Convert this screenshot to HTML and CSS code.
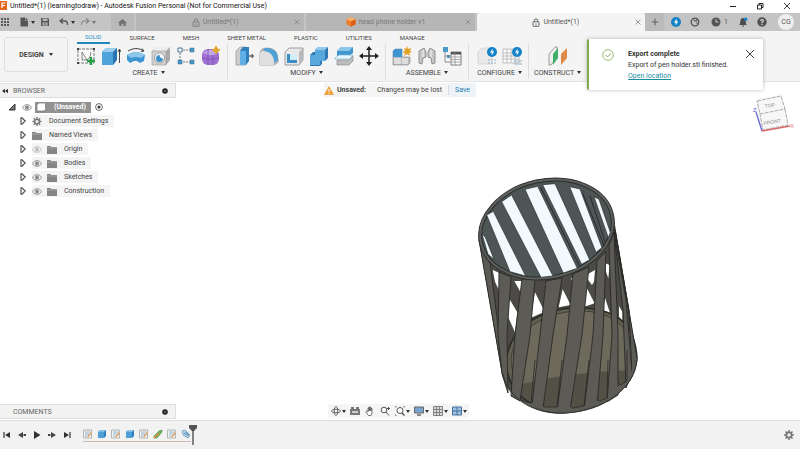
FILE: index.html
```html
<!DOCTYPE html>
<html lang="en">
<head>
<meta charset="utf-8">
<title>Untitled*(1) - Autodesk Fusion Personal</title>
<link rel="stylesheet" href="styles.css">
</head>
<body>
<svg class="defs" aria-hidden="true">
  <symbol id="close" viewBox="0 0 10 10"><path d="M1 1l8 8M9 1l-8 8" fill="none" stroke="currentColor"/></symbol>
  <symbol id="lock" viewBox="0 0 8 10"><path d="M2 4V3a2 2 0 0 1 4 0v1" fill="none" stroke="currentColor"/><rect x=".7" y="4.2" width="6.6" height="5" rx=".5" fill="none" stroke="currentColor"/><path d="M4 6v1.600" stroke="currentColor"/></symbol>
  <symbol id="folder" viewBox="0 0 10 9"><path d="M0 1h3.500l1 1H10v7H0z" fill="#858585"/><path d="M0 3h10" stroke="#bbb" stroke-width=".6"/></symbol>
  <symbol id="eye" viewBox="0 0 10 7"><path d="M.4 3.500C2.500-.2 7.500-.2 9.600 3.500 7.500 7.200 2.500 7.200.4 3.500z" fill="#eee" stroke="#888" stroke-width=".9"/><circle cx="5" cy="3.500" r="1.900" fill="#888"/></symbol>
  <symbol id="gear" viewBox="0 0 10 10"><circle cx="5" cy="5" r="2.600" fill="none" stroke="#777" stroke-width="1.700"/><path d="M5 0v2M5 8v2M0 5h2M8 5h2M1.500 1.500l1.400 1.400M7.100 7.100l1.400 1.400M8.500 1.500L7.100 2.900M2.900 7.100L1.500 8.500" stroke="#777" stroke-width="1.500"/></symbol>
  <symbol id="expand" viewBox="0 0 6 8"><path d="M1 .8v6.400h1L5.200 4 2 .8z" fill="#fff" stroke="#444" stroke-width="1.100"/></symbol>
  <symbol id="dot" viewBox="0 0 6 6"><circle cx="3" cy="3" r="2.800" fill="#222"/><path d="M1.800 3h2.400" stroke="#ddd" stroke-width=".6"/></symbol>
  <symbol id="bolt" viewBox="0 0 10 10"><circle cx="5" cy="5" r="5" fill="#1682c8"/><path d="M5.600 1.800L3 5.500h1.700V8.200L7.200 4.500H5.600z" fill="#fff"/></symbol>
  <symbol id="t-sketch" viewBox="0 0 10 10"><path d="M.5 1h8v8h-8z" fill="#f4f4f4" stroke="#999" stroke-width=".7"/><path d="M2 3h5M2 5h4M2 7h2" stroke="#5f9cc4" stroke-width=".7"/><path d="M4.500 8l4-4.500" stroke="#e0a060" stroke-width="1.400"/></symbol>
  <symbol id="t-extrude" viewBox="0 0 10 10"><path d="M1 3l2-2h6v6L7 9H1z" fill="#2f80be"/><path d="M1 3l2-2h6L7 3z" fill="#86c0e6"/><path d="M1 3h6v6H1z" fill="#4f9fd6"/></symbol>
</svg>

<header class="titlebar">
  <svg class="logo" viewBox="0 0 8 9"><path d="M0 0h7v9H0z" fill="#e4651c"/><path d="M2 7V2h3.500M2 4.500h3" fill="none" stroke="#fff" stroke-width="1.200"/></svg>
  <h1>Untitled*(1) (learningtodraw) - Autodesk Fusion Personal (Not for Commercial Use)</h1>
  <div class="window-buttons">
    <button aria-label="Minimize"><svg viewBox="0 0 8 8"><path d="M1 4.500h6" stroke="#222"/></svg></button>
    <button aria-label="Restore"><svg viewBox="0 0 8 8"><path d="M1.500 3h4v4h-4zM3 3V1.500h4v4H5.500" fill="none" stroke="#222"/></svg></button>
    <button aria-label="Close window"><svg viewBox="0 0 8 8"><path d="M1 1l6 6M7 1L1 7" stroke="#222" stroke-width=".9"/></svg></button>
  </div>
</header>

<nav class="docbar" aria-label="Documents">
  <div class="quick">
    <button aria-label="Data panel"><svg viewBox="0 0 10 10" fill="#5a5a5a"><path d="M1 1h2v2H1zM4 1h2v2H4zM7 1h2v2H7zM1 4h2v2H1zM4 4h2v2H4zM7 4h2v2H7zM1 7h2v2H1zM4 7h2v2H4zM7 7h2v2H7z"/></svg></button>
    <button aria-label="File" class="menu"><svg viewBox="0 0 10 10"><path d="M1.500.5h4.500v3h3v6H1.500zM6.600.5L9 3H6.600z" fill="#555"/></svg></button>
    <button aria-label="Save"><svg viewBox="0 0 10 10"><path d="M1 1h7l1 1v7H1z" fill="#555"/><path d="M2.500 1.500h5v2.500h-5zM2.500 5.500h5v3h-5z" fill="#b5b5b5"/><path d="M4 7h2" stroke="#555"/></svg></button>
    <button aria-label="Undo" class="menu"><svg viewBox="0 0 10 10"><path d="M4 1.500L1 4l3 2.500M1.500 4H6q2.500 0 2.500 4" fill="none" stroke="#555" stroke-width="1.300"/></svg></button>
    <button aria-label="Redo" class="menu faint"><svg viewBox="0 0 10 10"><path d="M6 1.500L9 4 6 6.500M8.500 4H4Q1.500 4 1.500 8" fill="none" stroke="#555" stroke-width="1.100"/></svg></button>
  </div>
  <button class="home" aria-label="Home"><svg viewBox="0 0 10 10"><path d="M0 5.200L5 1l5 4.200H8.600V9H6V6.500H4V9H1.400V5.200z" fill="#707070"/></svg></button>
  <div class="doctab"><button class="name"><svg class="lock"><use href="#lock"/></svg>Untitled*(1)</button><button aria-label="Close tab" class="x"><svg><use href="#close"/></svg></button></div>
  <div class="doctab"><button class="name"><svg class="cube" viewBox="0 0 10 10"><path d="M5 .3l4.500 2v5L5 9.700.5 7.300v-5z" fill="#ee7c28"/><path d="M5 .3l4.500 2L5 4.500.5 2.300z" fill="#f8b06b"/><path d="M5 4.500l4.500-2.200v5L5 9.700z" fill="#d95f16"/></svg>head phone holder v1</button><button aria-label="Close tab" class="x"><svg><use href="#close"/></svg></button></div>
  <div class="doctab active"><button class="name"><svg class="lock"><use href="#lock"/></svg>Untitled*(1)</button><button aria-label="Close tab" class="x"><svg><use href="#close"/></svg></button></div>
  <button class="new" aria-label="New tab"><svg viewBox="0 0 10 10"><path d="M5 1v8M1 5h8" stroke="#666" stroke-width="1.500"/></svg></button>
  <div class="account">
    <button aria-label="Extensions"><svg><use href="#bolt"/></svg></button>
    <button aria-label="Sync"><svg viewBox="0 0 10 10"><circle cx="5" cy="5" r="3.800" fill="none" stroke="#555" stroke-width="1.300"/><path d="M3.500 2.500L5 4h2M7 2v2M6.500 5.500l1 1.500" stroke="#555" stroke-width="1.100" fill="none"/></svg></button>
    <button aria-label="Job status" class="jobs"><svg viewBox="0 0 10 10"><circle cx="5" cy="5" r="4.500" fill="#555"/><path d="M5 2.200V5h2.500" stroke="#ccc" fill="none"/></svg>1</button>
    <button aria-label="Notifications"><svg viewBox="0 0 10 10"><path d="M1 8q1.300-1 1.300-3.500Q2.500 1 5 1t2.700 3.500Q7.700 7 9 8zM4 8.500h2v1H4z" fill="#4c4c4c"/><circle cx="7.700" cy="2.300" r="1.800" fill="#1682c8"/></svg></button>
    <button aria-label="Help"><svg viewBox="0 0 10 10"><circle cx="5" cy="5" r="4.700" fill="#505050"/><path d="M3.600 3.900Q3.700 2.500 5 2.500t1.400 1.300Q6.400 4.700 5 5.200V6M5 6.800V8" fill="none" stroke="#eee" stroke-width="1.100"/></svg></button>
    <button class="avatar">CG</button>
  </div>
</nav>

<section class="ribbon">
  <button class="workspace">DESIGN<i class="caret"></i></button>
  <div class="tools">
    <div class="ribbon-tabs">
      <button class="on">SOLID</button><button>SURFACE</button><button>MESH</button><button>SHEET METAL</button><button>PLASTIC</button><button>UTILITIES</button><button>MANAGE</button>
    </div>
    <div class="groups">
      <div class="group">
        <div class="icons">
          <button aria-label="Create sketch"><svg viewBox="0 0 20 20"><path d="M2 3h16v14H2z" fill="#f8f8f8" stroke="#555" stroke-width=".8" stroke-dasharray="3 1"/><path d="M1 2h2v2H1zM17 2h2v2h-2zM1 16h2v2H1z" fill="#444"/><path d="M6 14V6M6 14h5q4-2 4-8M6 6l5 8" fill="none" stroke="#666" stroke-width=".8"/><path d="M15 11v8M11 15h8" stroke="#24a045" stroke-width="2.400"/></svg></button>
          <button aria-label="Extrude"><svg viewBox="0 0 20 20"><path d="M1 6l4-4h11v12l-4 5H1z" fill="#2a73b1"/><path d="M1 6l4-4h11l-4 4z" fill="#9bcdec"/><path d="M1 6h11v13H1z" fill="#4fa3db"/><path d="M18.500 17V4M17 6l1.500-3L20 6" fill="none" stroke="#333" stroke-width=".9"/></svg></button>
          <button aria-label="Revolve"><svg viewBox="0 0 20 20"><path d="M1 9q9-6 18 0l-1 6-4 2-3-2H8l-4 2-3-3z" fill="#3d95d2"/><path d="M1 9q9-6 18 0l-4 3q-5-2-10 0z" fill="#8cc7ec"/><path d="M2 5q8-5 16 0M16 2.500L18 5l-3 .5" fill="none" stroke="#444"/></svg></button>
          <button aria-label="Hole"><svg viewBox="0 0 20 20"><path d="M1 5l4-4h14v13l-4 5H1z" fill="#aaa"/><path d="M1 5l4-4h14l-4 4z" fill="#eee"/><path d="M1 5h14v14H1z" fill="#d0d0d0" stroke="#999" stroke-width=".6"/><circle cx="8.500" cy="12" r="5" fill="#f5f8f9" stroke="#888" stroke-width=".7"/><path d="M8.500 9a3.500 3.500 0 1 0 3.500 3.500q-3 0-3.500-3.500z" fill="#3a92cc"/></svg></button>
          <button aria-label="Pattern"><svg viewBox="0 0 20 20"><path d="M4 4h12M4 4v12h12" fill="none" stroke="#777" stroke-dasharray="2 1"/><path d="M2 2h4v4H2z" fill="#fff" stroke="#446f8d"/><path d="M14 2h4v4h-4zM2 14h4v4H2zM14 14h4v4h-4z" fill="#4a96c9" stroke="#356f96" stroke-width=".5"/></svg></button>
          <button aria-label="Create form"><svg viewBox="0 0 20 20"><rect x="1" y="3" width="17" height="16" rx="6" fill="#9d70d2"/><path d="M2 7q4-4 9-3l6 3q-5 3-9 2t-6-2z" fill="#c3a6e6"/><path d="M7 3v16M12 9v10M1 12q8 3 17 0" fill="none" stroke="#7a52b2" stroke-width=".8"/><path d="M15 0l1.200 2.800L19 4l-2.800 1.200L15 8l-1.200-2.800L11 4l2.800-1.200z" fill="#e4a623" stroke="#e4a623"/></svg></button>
        </div>
        <button class="label">CREATE<i class="caret"></i></button>
      </div>
      <div class="group">
        <div class="icons">
          <button aria-label="Press pull"><svg viewBox="0 0 20 20"><path d="M2 5l4-4h6v18H2z" fill="#ccc" stroke="#888" stroke-width=".6"/><path d="M6 5l3-4h6v14l-3 4H6z" fill="#2e7fbd"/><path d="M6 5h6v14H6z" fill="#61b0e3"/><path d="M15 10h4M17.500 8l2 2-2 2" fill="none" stroke="#222"/></svg></button>
          <button aria-label="Fillet"><svg viewBox="0 0 20 20"><path d="M1 19V8q0-6 7-6 11 0 11 12v2l-4 3z" fill="#b9b9b9" stroke="#888" stroke-width=".7"/><path d="M6 2h3q10 1 10 12l-4 3Q15 7 4 5z" fill="#4fa2d8"/><path d="M1 19V8q0-2 2-3 12 0 12 12v2z" fill="#e0e0e0"/></svg></button>
          <button aria-label="Shell"><svg viewBox="0 0 20 20"><path d="M1 6l4-4h14v12l-4 5H1z" fill="#e9e9e9" stroke="#888" stroke-width=".8"/><path d="M15 6l4-4v12l-4 5z" fill="#b9b9b9"/><path d="M3 8h10v9H3z" fill="#3c8cc6"/><path d="M6 8h7v6H6z" fill="#d4edfb"/></svg></button>
          <button aria-label="Combine"><svg viewBox="0 0 20 20"><path d="M6 4l3-3h10v11l-3 3h-3v3l-2 2H1V9l3-3h2z" fill="#2f79b2"/><path d="M6 4h10v11h-5v4H1V9h5z" fill="#59a8dc"/><path d="M6 4l3-3h10l-3 3z" fill="#91c9ed"/></svg></button>
          <button aria-label="Split"><svg viewBox="0 0 20 20"><path d="M3 5l4-4h12v6l-4 3H3z" fill="#4296cf"/><path d="M3 5l4-4h12l-4 4z" fill="#8cc7eb"/><path d="M1 12l4-3h14l-3 4H1z" fill="#e8f7ff" stroke="#76b4d8" stroke-width=".7"/><path d="M3 14h12l4-4v5l-4 4H3z" fill="#bcbcbc" stroke="#888" stroke-width=".6"/></svg></button>
          <button aria-label="Move"><svg viewBox="0 0 20 20"><path d="M10 2v16M2 10h16" stroke="#222" stroke-width="1.500"/><path d="M10 0l3 4H7zM10 20l3-4H7zM0 10l4-3v6zM20 10l-4-3v6z" fill="#222"/></svg></button>
        </div>
        <button class="label">MODIFY<i class="caret"></i></button>
      </div>
      <div class="group">
        <div class="icons">
          <button aria-label="New component"><svg viewBox="0 0 20 20"><path d="M1 5l2-2h7v8h8v6l-2 2H1z" fill="#bababa" stroke="#888" stroke-width=".6"/><path d="M1 5l2-2h7v8H1z" fill="#3e95d1"/><path d="M2 12h7v6H2zM10 12h6v6h-6z" fill="#dedede"/><path d="M15 0l1 3 3-1-1 3 2 1-3 1 1 3-3-2-3 2 1-3-3-1 3-1-1-3 2 1z" fill="#e0a020"/></svg></button>
          <button aria-label="Joint"><svg viewBox="0 0 20 20"><path d="M2 5l5-3 2 4v5l-3 1-1 6-3-1zM18 5l-5-3-2 4v5l3 1 1 6 3-1z" fill="#c6c6c6" stroke="#888" stroke-width=".9"/><path d="M6 4v7M14 4v7" stroke="#f5f5f5"/></svg></button>
          <button aria-label="Bill of materials"><svg viewBox="0 0 20 20"><path d="M1 1h5v5H1zM5 9h3v3H5z" fill="#4a99cb"/><path d="M3 6v10h5M3 10h5" fill="none" stroke="#777" stroke-width=".8"/><path d="M9 6h10v13H9z" fill="#fafafa" stroke="#666" stroke-width=".8"/><path d="M9 6h10v2.500H9z" fill="#555"/><path d="M9 11h10M9 13.500h10M9 16h10M13 6v13" stroke="#888" stroke-width=".7"/></svg></button>
        </div>
        <button class="label">ASSEMBLE<i class="caret"></i></button>
      </div>
      <div class="group narrow">
        <div class="icons">
          <button aria-label="Configure"><svg viewBox="0 0 20 20"><path d="M1 6l4-4h10v16H1z" fill="#e9e9e9" stroke="#ccc" stroke-width=".7"/><path d="M11 14h8M11 17h8" stroke="#83a7bd" stroke-width=".8" stroke-dasharray="2 1"/><use href="#bolt" x="10" y="1" width="10" height="10"/></svg></button>
          <button aria-label="Configuration table"><svg viewBox="0 0 20 20"><path d="M1 3h16v14H1zM1 7h16M1 10h16M1 13h16M5 3v14M9 3v14M13 3v14" fill="#fafafa" stroke="#aaa" stroke-width=".7"/><path d="M12 15h8M12 18h8" stroke="#83a7bd" stroke-width=".8"/><use href="#bolt" x="10" y="1" width="10" height="10"/></svg></button>
        </div>
        <button class="label">CONFIGURE<i class="caret"></i></button>
      </div>
      <div class="group single">
        <div class="icons">
          <button aria-label="Construct plane"><svg viewBox="0 0 20 20"><path d="M1 8l6-7h2v10l-6 8H1z" fill="#eee" stroke="#888" stroke-width=".8"/><path d="M5 8l5-6v10l-5 7z" fill="#3daf68"/><path d="M13 8l6-6v10l-6 7z" fill="#e08847"/></svg></button>
        </div>
        <button class="label">CONSTRUCT<i class="caret"></i></button>
      </div>
    </div>
  </div>
</section>

<main class="canvas">
  <div class="stage">
    <svg class="model" viewBox="475 175 166 242" role="img" aria-label="Pen holder model">
      <path d="M479 238L502 372C509 400 538 415 566 413C603 410 634 390 637 360L614 222Z" fill="#4b4a46" stroke="#30302d"/>
      <g transform="translate(470 235) scale(.3333)" fill="#fff">
        <path d="M68 105L90 115 88 168 75 140zM133 138H158L152 172zM224 148H237L232 160zM303 130H314L309 142zM117 190L142 232 135 292 114 245zM195 172L224 230 183 248zM278 163L302 210 266 217zM350 158L374 205 342 215zM345 122L375 105 372 140 366 150zM405 188L421 237 398 230zM406 85L419 90 415 130 408 110zM447 213L457 230V257L447 245z"/>
      </g>
      <path d="M506 363C509 323 548 306 584 308C620 310 635 327 637 358C630 390 601 410 565 411C530 410 508 393 506 363Z" fill="#615f52" stroke="#292a27" stroke-width="1.500"/>
      <path d="M511 358C516 327 550 310 584 311C616 313 632 330 634 356C627 390 602 406 565 407C532 405 512 389 511 358Z" fill="#6d6a5b" stroke="#35352f" stroke-width=".8"/>
      <path d="M515 386Q565 372 634 370Q630 400 565 408Q526 407 515 386Z" fill="#535146"/>
      <g fill="#5d5b56" stroke="#292927" stroke-width=".9">
        <path d="M479 240L490 262 501 350 507 388 502 372Z"/>
        <path d="M499 272L511 277 507 335 508 393 502 374 498 335Z"/>
        <path d="M522 279L535 280 530 335 520 401 511 396 515 335Z"/>
        <path d="M546 281L562 278 553 335 543 408 532 405 540 335Z"/>
        <path d="M573 274L589 267 582 335 570 410 557 411 567 335Z"/>
        <path d="M597 261L606 251 603 335 597 406 584 410 593 335Z"/>
        <path d="M609 245L614 232 618 335 618 395 607 402 612 335Z"/>
        <path d="M614 232L626 300 632 372 626 388 623 310Z"/>
        <path d="M615 230L637 358 632 374 629 310Z"/>
      </g>
      <path d="M503 374Q506 392 519 400L532 403 542 407H558L570 407 585 406 597 401 608 398 618 386 627 382 637 357C636 389 602 413 566 413C534 413 506 398 503 374Z" fill="#5d5b56"/>
      <path d="M503 374C509 402 538 415 566 413C603 410 634 390 637 360M520 398L522 401 531 403 535 360M543 404L545 407H557L562 360M570 406L573 408 584 406 589 360M597 399L600 401 607 398 608 360M618 383L621 385 627 380V350" fill="none" stroke="#292927" stroke-width=".8"/>
      <ellipse cx="546.500" cy="229" rx="68.500" ry="50" transform="rotate(-12 546.500 229)" fill="#5d605d" stroke="#2d2f2d" stroke-width="1"/>
      <ellipse cx="546.500" cy="229" rx="65.500" ry="47" transform="rotate(-12 546.500 229)" fill="#4e5555" stroke="#292c2b" stroke-width="1"/>
      <g transform="translate(465 170) scale(.3333)" fill="#f1f9fd" stroke="#272d2e" stroke-width="2">
        <path d="M51 192L61 202 87 268 69 253zM65 135L85 124 182 318 135 305zM110 95L140 75 264 318 228 322zM180 58L218 49 337 295 295 309zM233 44L270 41 374 269 350 283zM314 50L345 57 411 233 393 247zM387 80L402 88 436 187 430 203z"/>
        <path d="M227 52L344 289M352 68L418 228M375 77L420 215" fill="none" stroke-width="3"/>
      </g>
    </svg>
    <svg class="viewcube" viewBox="0 0 46 42" role="img" aria-label="View cube">
      <path d="M5 5L29 0 34 15 36 31 11 36 5 19Z" fill="#f7f7f7"/>
      <path d="M5 7L29 2 33 15 8 20ZM33 15L36 31 11 36 8 20" fill="none" stroke="#999" stroke-width=".8" stroke-dasharray="4 1"/>
      <path d="M4 18L10 37" stroke="#6666d0" stroke-width="1.300"/><path d="M10 37L38 32" stroke="#d66" stroke-width="1.300"/>
      <g font-family="Liberation Sans, sans-serif" font-size="5" fill="#888"><text x="13" y="14" transform="rotate(-9 13 14)">TOP</text><text x="12" y="31" transform="rotate(-9 12 31)">FRONT</text></g>
      <g font-family="Liberation Sans, sans-serif" font-size="6"><text x="1" y="18" fill="#55c">Z</text><text x="38" y="34" fill="#e77">X</text></g>
    </svg>
  </div>

  <aside class="browser">
    <header class="panel-head"><svg class="collapse" viewBox="0 0 8 6"><path d="M4 0v6L0 3zM8 0v6L4 3z" fill="#333"/></svg><h2>BROWSER</h2><button aria-label="Browser options"><svg><use href="#dot"/></svg></button></header>
    <ul class="tree">
      <li class="root"><svg class="open" viewBox="0 0 8 8"><path d="M7 1v6H1z" fill="#777" stroke="#333"/></svg><svg class="eye"><use href="#eye"/></svg><span class="doc"><svg viewBox="0 0 10 10"><path d="M1 2.500L3 1h6.500v6.500L8 9H1z" fill="#fff" stroke="#777" stroke-width=".7"/></svg>(Unsaved)</span><svg class="target" viewBox="0 0 8 8"><circle cx="4" cy="4" r="3.400" fill="#fff" stroke="#444" stroke-width=".8"/><circle cx="4" cy="4" r="1.500" fill="#333"/></svg></li>
      <li><svg class="arrow"><use href="#expand"/></svg><span><svg class="folder"><use href="#gear"/></svg>Document Settings</span></li>
      <li><svg class="arrow"><use href="#expand"/></svg><span><svg class="folder"><use href="#folder"/></svg>Named Views</span></li>
      <li><svg class="arrow"><use href="#expand"/></svg><span><svg class="eye off"><use href="#eye"/></svg><svg class="folder"><use href="#folder"/></svg>Origin</span></li>
      <li><svg class="arrow"><use href="#expand"/></svg><span><svg class="eye"><use href="#eye"/></svg><svg class="folder"><use href="#folder"/></svg>Bodies</span></li>
      <li><svg class="arrow"><use href="#expand"/></svg><span><svg class="eye"><use href="#eye"/></svg><svg class="folder"><use href="#folder"/></svg>Sketches</span></li>
      <li><svg class="arrow"><use href="#expand"/></svg><span><svg class="eye"><use href="#eye"/></svg><svg class="folder"><use href="#folder"/></svg>Construction</span></li>
    </ul>
    <footer class="panel-head comments"><h2>COMMENTS</h2><button aria-label="Comment options"><svg><use href="#dot"/></svg></button></footer>
  </aside>

  <div class="center">
    <div class="unsaved"><svg viewBox="0 0 10 9"><path d="M5 0l5 9H0z" fill="#eda13a"/><path d="M5 3v3M5 7v1" stroke="#fff"/></svg><strong>Unsaved:</strong><span>Changes may be lost</span><button>Save</button></div>
    <div class="navbar">
      <button class="menu" aria-label="Orbit"><svg viewBox="0 0 10 10"><ellipse cx="5" cy="5" rx="4.500" ry="1.800" fill="none" stroke="#666"/><ellipse cx="5" cy="5" rx="1.800" ry="4.500" fill="none" stroke="#666"/></svg></button>
      <button aria-label="Look at"><svg viewBox="0 0 10 10"><path d="M0 3h10v6H0zM1 1h3v2H1zM6 1h3v2H6z" fill="#777"/><path d="M2 5h6v2H2z" fill="#ccc"/></svg></button>
      <button aria-label="Pan"><svg viewBox="0 0 10 10"><path d="M3 9L.8 5.500l.8-.7L3 6V2h1v3V1h1v4V1.400h1V5V2.500h1V7L6 9.500H3.500z" fill="#fff" stroke="#555" stroke-width=".8"/></svg></button>
      <button aria-label="Zoom"><svg viewBox="0 0 10 10"><circle cx="4" cy="4" r="2.800" fill="#fff" stroke="#555"/><path d="M6 6l3 3.500M7 2.500h3M8.500 1v3" stroke="#555"/></svg></button>
      <button class="menu" aria-label="Fit"><svg viewBox="0 0 10 10"><path d="M0 2V0h2M8 0h2v2M0 8v2h2" fill="none" stroke="#777"/><circle cx="5" cy="4.500" r="3" fill="#fff" stroke="#555"/><path d="M7 7l2.500 2.500" stroke="#555" stroke-width="1.500"/></svg></button>
      <button class="menu" aria-label="Display settings"><svg viewBox="0 0 10 10"><path d="M.5 1h9v6h-9z" fill="#78a5cf" stroke="#666"/><path d="M3 9h4" stroke="#666" stroke-width="1.500"/></svg></button>
      <button class="menu" aria-label="Grid"><svg viewBox="0 0 10 10"><path d="M.5.5h9v9h-9zM.5 3.500h9M.5 6.500h9M3.500.5v9M6.500.5v9" fill="#ddd" stroke="#777" stroke-width=".9"/></svg></button>
      <button class="menu" aria-label="Viewports"><svg viewBox="0 0 10 10"><path d="M.5 1h9v8h-9zM5 1v8M.5 5h9" fill="#9bc2e4" stroke="#47709b"/></svg></button>
    </div>
  </div>
</main>

<footer class="timeline">
  <div class="player">
    <button aria-label="Go to start"><svg viewBox="0 0 8 8"><path d="M1 1v6" stroke="#333" stroke-width="1.200"/><path d="M7 1v6L2 4z" fill="#333"/></svg></button>
    <button aria-label="Step back"><svg viewBox="0 0 8 8"><path d="M5 1v6L0 4zM5.500 3H8v2H5.500z" fill="#444"/></svg></button>
    <button aria-label="Play"><svg viewBox="0 0 8 8"><path d="M1 0v8l6.500-4z" fill="#333"/></svg></button>
    <button aria-label="Step forward"><svg viewBox="0 0 8 8"><path d="M3 1v6l5-3zM0 3h2.500v2H0z" fill="#444"/></svg></button>
    <button aria-label="Go to end"><svg viewBox="0 0 8 8"><path d="M7 1v6" stroke="#333" stroke-width="1.200"/><path d="M1 1v6l5-3z" fill="#333"/></svg></button>
  </div>
  <div class="features">
    <button aria-label="Sketch 1"><svg><use href="#t-sketch"/></svg></button>
    <button aria-label="Extrude 1"><svg><use href="#t-extrude"/></svg></button>
    <button aria-label="Sketch 2"><svg><use href="#t-sketch"/></svg></button>
    <button aria-label="Extrude 2"><svg><use href="#t-extrude"/></svg></button>
    <button aria-label="Sketch 3"><svg><use href="#t-sketch"/></svg></button>
    <button aria-label="Plane"><svg viewBox="0 0 10 10"><path d="M1 7l5-5 3-1v2L4 9H1z" fill="#66b35a" stroke="#4d8a45" stroke-width=".6"/><path d="M1 9l5-5" stroke="#e3954d" stroke-width="1.500"/></svg></button>
    <button aria-label="Sketch 4"><svg><use href="#t-sketch"/></svg></button>
    <button aria-label="Circular pattern"><svg viewBox="0 0 10 10"><path d="M1 2l3-1 5 5-2 3-5-3z" fill="#b6d4e8" stroke="#7398b5" stroke-width=".8"/><path d="M3 4l4 3M5 3l3 3" stroke="#4a88b5"/></svg></button>
  </div>
  <svg class="marker" viewBox="0 0 8 20"><path d="M0 0h8v3L5 6H3L0 3z" fill="#555"/><path d="M4 5v15" stroke="#444" stroke-width="1.300"/></svg>
  <button class="settings" aria-label="Timeline settings"><svg><use href="#gear"/></svg></button>
</footer>

<section class="toast" role="status">
  <svg class="ok" viewBox="0 0 12 12"><circle cx="6" cy="6" r="5.300" fill="none" stroke="#8fb35c" stroke-width=".9"/><path d="M3.500 6l2 2 3.200-3.800" fill="none" stroke="#8fb35c"/></svg>
  <div class="message"><strong>Export complete</strong><span>Export of pen holder.stl finished.</span><a href="#">Open location</a></div>
  <button aria-label="Dismiss"><svg><use href="#close"/></svg></button>
</section>
</body>
</html>
```
FILE: styles.css
```css
* { box-sizing: border-box; }
body {
  margin: 0;
  min-height: 100vh;
  display: flex;
  flex-direction: column;
  position: relative;
  background: #fff;
  color: #444;
  font: 7px/10px Roboto, "Liberation Sans", sans-serif;
}
button { border: 0; padding: 0; margin: 0; background: none; color: inherit; font: inherit; display: flex; align-items: center; justify-content: center; }
svg { display: block; flex: none; width: 10px; height: 10px; }
h1, h2, ul { margin: 0; padding: 0; font: inherit; list-style: none; }
.defs { position: absolute; width: 0; height: 0; }
.caret, .menu::after { content: ""; border: 2px solid transparent; border-top: 3px solid #333; border-bottom: 0; margin-left: 3px; }

.titlebar { display: flex; align-items: center; height: 13px; padding-bottom: 2px; color: #111; }
.titlebar .logo { width: 8px; height: 9px; margin-right: 2px; }
.titlebar h1 { flex: 1; }
.window-buttons { display: flex; gap: 19px; padding-right: 9px; }
.window-buttons svg { width: 8px; height: 8px; }

.docbar { display: flex; align-items: stretch; height: 18px; background: #c4c4c4; color: #777; }
.quick { display: flex; align-items: center; width: 111px; }
.quick button { margin-right: 9px; }
.quick .menu { margin-right: 5px; }
.quick .menu::after { margin-left: 2px; }
.faint { opacity: .55; }
.home { width: 23px; background: #b9b9b9; margin-right: 2px; }
.home svg { width: 9px; height: 9px; }
.doctab { flex: 1; display: flex; background: #b6b6b6; margin-right: 2px; padding-right: 4px; border-radius: 2px 2px 0 0; }
.doctab .name { flex: 1; gap: 3px; }
.doctab .lock { width: 8px; height: 9px; }
.doctab .x svg { width: 6px; height: 6px; }
.doctab.active { background: #f4f4f4; color: #555; margin-right: 0; }
.new { width: 19px; background: #bbb; }
.new svg { width: 8px; height: 8px; }
.account { display: flex; align-items: center; gap: 9px; padding: 0 6px 0 7px; }
.jobs { gap: 3px; margin: 0 1px 0 2px; color: #555; }
.avatar { width: 16px; height: 16px; margin-left: 2px; border-radius: 50%; background: #eee; color: #555; }

.ribbon { display: flex; height: 51px; padding-left: 4px; background: #f4f4f4; border-bottom: 1px solid #e3e3e3; }
.workspace { width: 64px; height: 35px; margin-top: 6px; border: 1px solid #dedede; border-radius: 3px; font-weight: 700; }
.workspace .caret { margin-left: 5px; }
.tools { flex: 1; padding-left: 5px; }
.ribbon-tabs { display: flex; gap: 12px; padding-left: 4px; height: 13px; color: #444; font-size: 6px; }
.ribbon-tabs button { padding: 0 8px; }
.ribbon-tabs .on { color: #2a8fc4; border-bottom: 2px solid #2287bb; }
.groups { display: flex; }
.group { display: flex; flex-direction: column; align-items: center; padding: 2px 6px 0; border-right: 1px solid #ddd; }
.group:first-child { padding-left: 3px; }
.group.narrow { padding-left: 8px; }
.group.single { border: 0; padding-left: 5px; }
.icons { display: flex; gap: 5px; }
.icons svg { width: 20px; height: 20px; }
.label { height: 13px; color: #444; }

.canvas { flex: 1; display: flex; position: relative; }
.stage { position: absolute; inset: 0; }
.model { position: absolute; left: 475px; top: 93px; width: 166px; height: 242px; }
.viewcube { position: absolute; right: 2px; top: 12px; width: 46px; height: 42px; }
.browser { width: 22%; position: relative; display: flex; flex-direction: column; padding: 1px 0; }
.panel-head { display: flex; align-items: center; height: 15px; padding: 0 7px 0 2px; background: #f2f2f2; border: 1px solid #ddd; border-left: 0; }
.panel-head h2 { flex: 1; color: #666; }
.panel-head svg { width: 6px; height: 6px; }
.panel-head .collapse { margin-right: 5px; }
.comments { margin-top: auto; padding-left: 13px; }
.tree { padding: 2px 0 0 20px; }
.tree li { display: flex; align-items: center; height: 14px; gap: 6px; }
.tree li span { display: flex; align-items: center; height: 12px; padding-right: 6px; background: #f4f4f4; gap: 5px; }
.tree .arrow { width: 6px; height: 8px; }
.tree .open { width: 8px; height: 8px; }
.tree .eye { width: 10px; height: 7px; }
.tree .off { opacity: .5; }
.tree .folder { width: 10px; height: 9px; margin-right: 2px; }
.tree .target { width: 8px; height: 8px; margin-left: -2px; }
.tree .root { margin-left: -12px; }
.tree .root .doc { height: 11px; background: #929292; color: #fff; font-weight: 700; padding: 0 5px 0 1px; margin-left: -3px; gap: 8px; }

.center { flex: 1; position: relative; display: flex; flex-direction: column; justify-content: space-between; align-items: flex-start; padding: 1px 0 2px 148px; }
.unsaved { display: flex; align-items: center; height: 14px; background: #f5f5f5; }
.unsaved svg { width: 10px; height: 9px; margin-right: 3px; }
.unsaved strong { margin-right: 11px; }
.unsaved span { padding-right: 6px; border-right: 1px solid #ddd; }
.unsaved button { align-self: stretch; padding: 0 6px; color: #1b80b6; background: #edf3f6; }
.navbar { display: flex; align-items: center; height: 14px; margin-left: 4px; padding: 0 3px; gap: 5px; background: #f5f5f5; }
.navbar .menu { margin-right: -1px; }
.navbar .menu::after { margin-left: 1px; }

.timeline { display: flex; align-items: center; height: 29px; padding: 0 6px 0 3px; background: #f2f2f2; border-top: 1px solid #ddd; }
.player { display: flex; gap: 7px; }
.player svg { width: 8px; height: 8px; }
.features { display: flex; gap: 4px; margin-left: 12px; padding-bottom: 2px; border-bottom: 1px solid #c9b9b0; }
.marker { width: 8px; height: 20px; margin-left: -2px; }
.settings { margin-left: auto; }

.toast { position: absolute; right: 37px; top: 39px; display: flex; width: 176px; height: 51px; padding: 10px 8px 0 13px; background: #fff; border-left: 2px solid #83a94f; border-radius: 2px; box-shadow: 0 0 4px #0004; }
.toast .ok { width: 12px; height: 12px; }
.message { flex: 1; display: flex; flex-direction: column; align-items: flex-start; padding-left: 14px; line-height: 11px; color: #333; }
.message a { color: #1c8c9e; }
.toast button { align-self: flex-start; }
```
